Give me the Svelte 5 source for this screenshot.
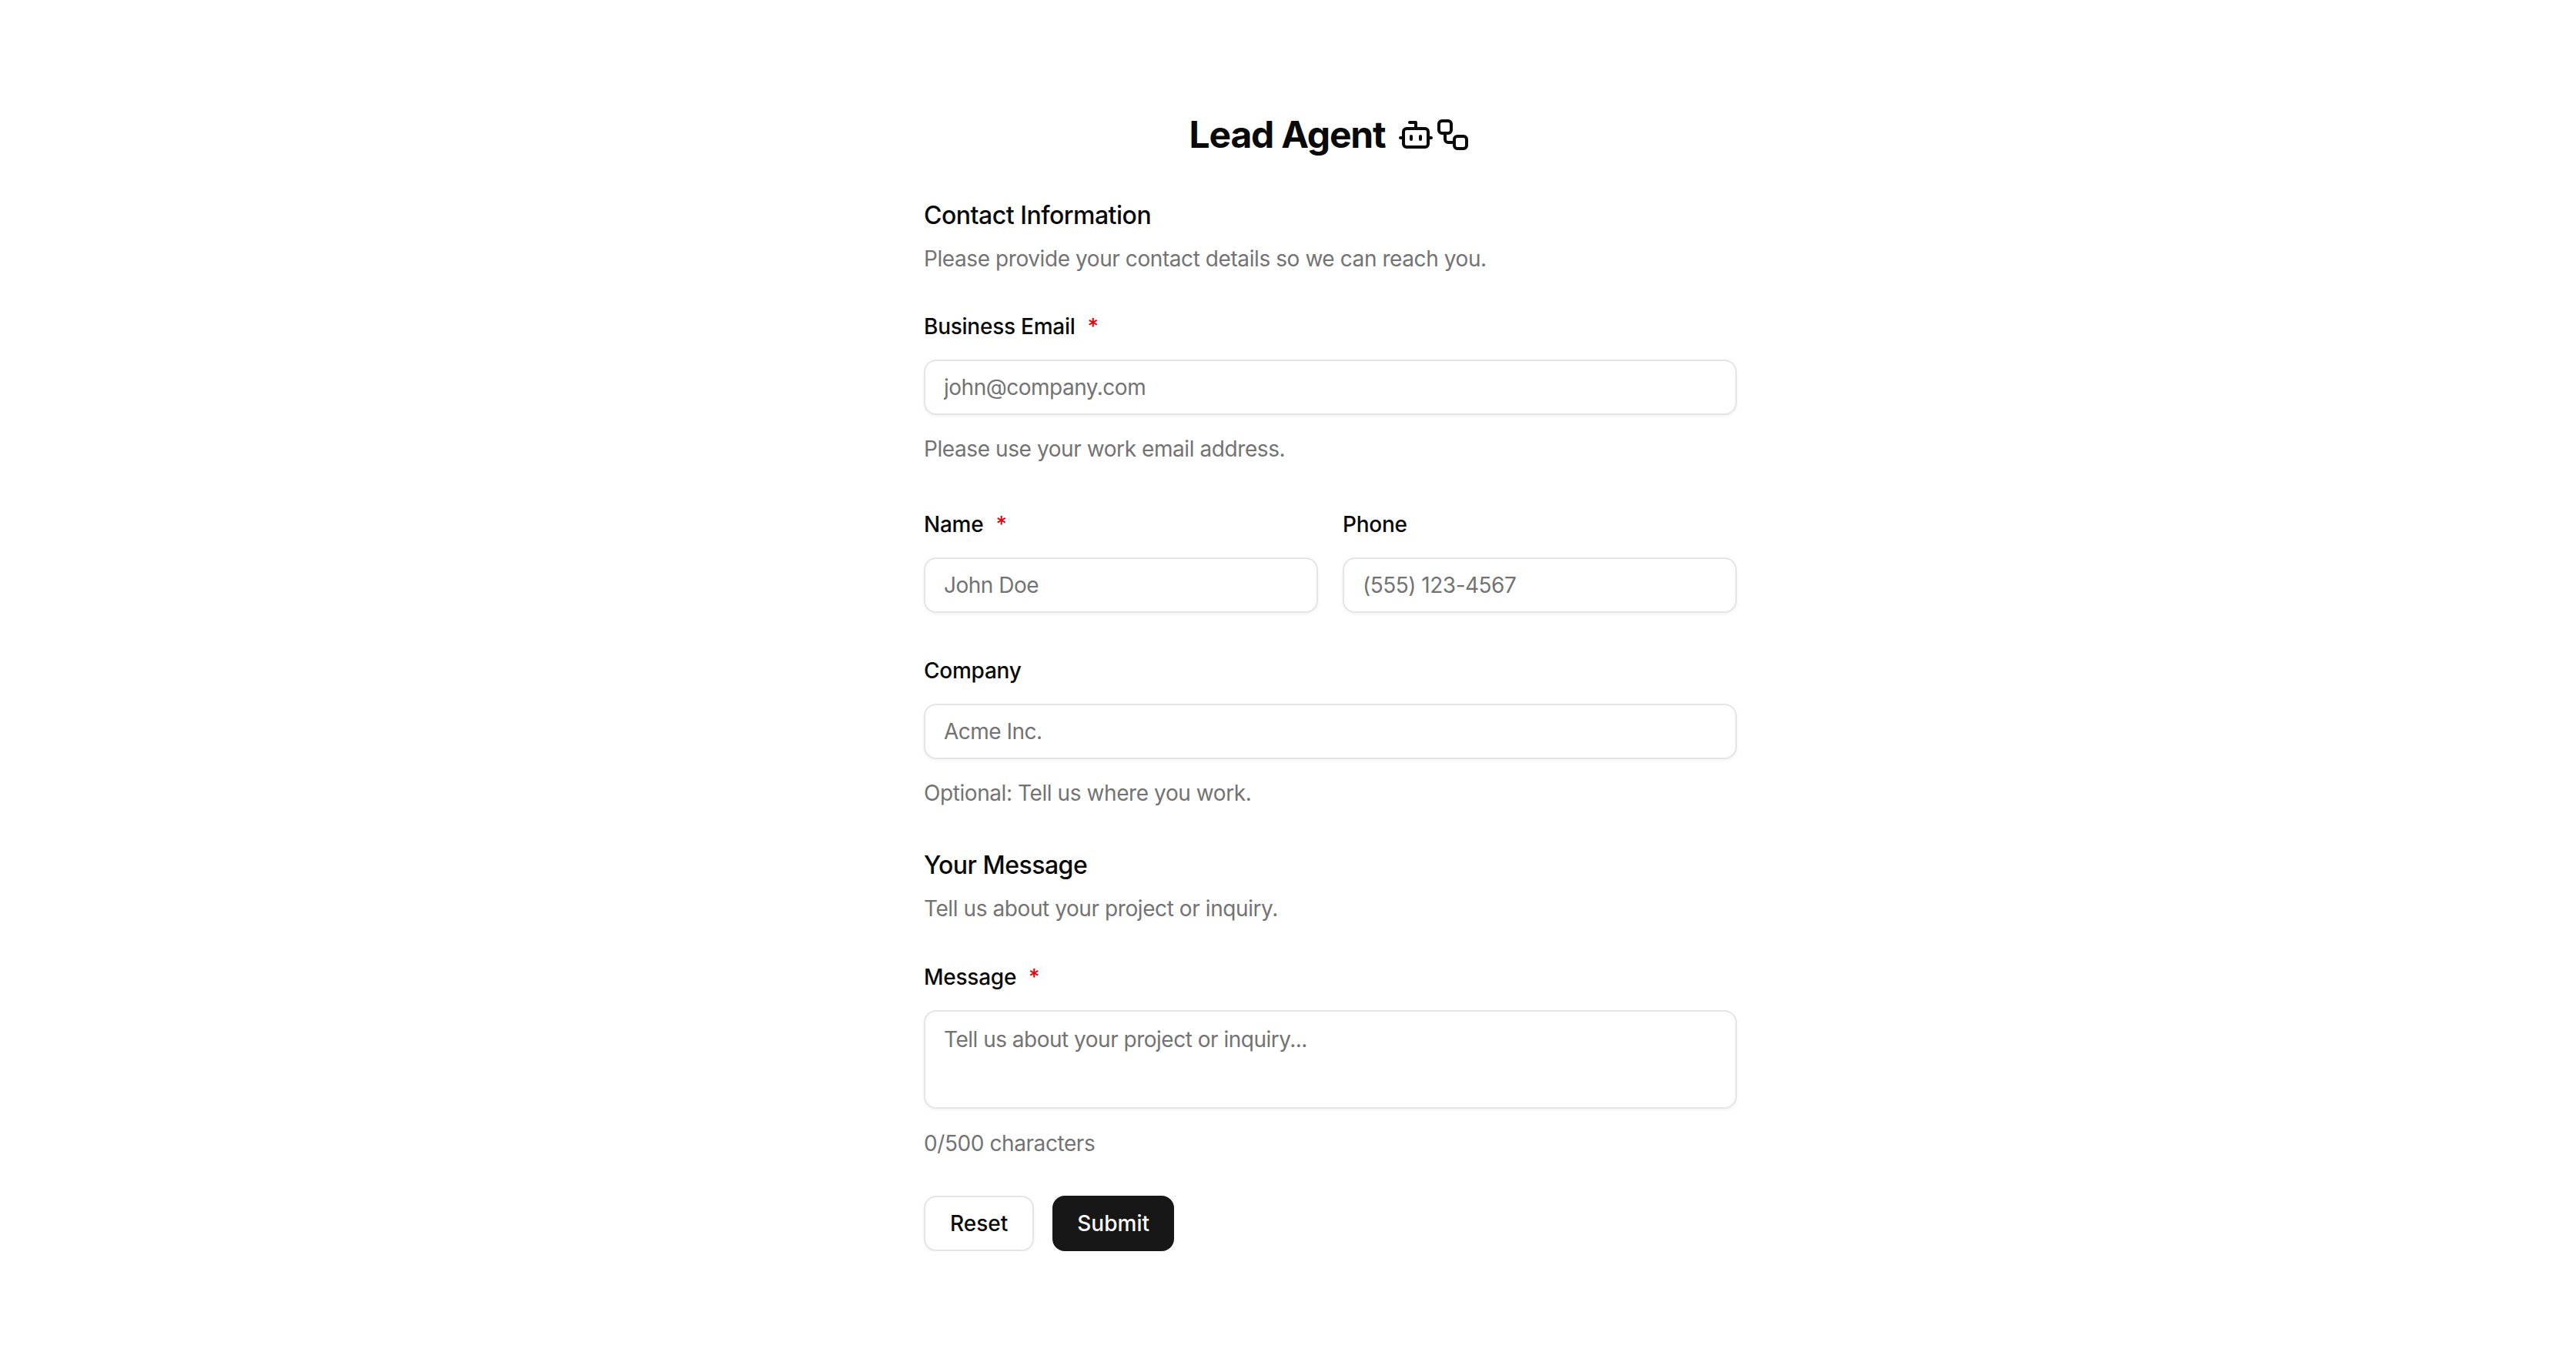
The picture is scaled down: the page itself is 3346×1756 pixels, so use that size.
<script>
  let message = $state('');
</script>

<div class="page">
  <form class="form" onsubmit={(e) => e.preventDefault()}>
    <div class="title">
      <h1>Lead Agent</h1>
      <div class="icons">
        <svg viewBox="0 0 24 24">
          <path d="M12 8V4H8" />
          <rect x="4" y="8" width="16" height="12" rx="2" />
          <path d="M2 14h2" />
          <path d="M20 14h2" />
          <path d="M15 13v2" />
          <path d="M9 13v2" />
        </svg>
        <svg viewBox="0 0 24 24">
          <rect x="3" y="3" width="8" height="8" rx="2" />
          <path d="M7 11v4a2 2 0 0 0 2 2h4" />
          <rect x="13" y="13" width="8" height="8" rx="2" />
        </svg>
      </div>
    </div>

    <section class="section-head">
      <h2>Contact Information</h2>
      <p class="muted">Please provide your contact details so we can reach you.</p>
    </section>

    <div class="field email">
      <label for="email">Business Email <span class="req">*</span></label>
      <input id="email" type="email" placeholder="john@company.com" />
      <p class="muted">Please use your work email address.</p>
    </div>

    <div class="row">
      <div class="field">
        <label for="name">Name <span class="req">*</span></label>
        <input id="name" type="text" placeholder="John Doe" />
      </div>
      <div class="field">
        <label for="phone">Phone</label>
        <input id="phone" type="tel" placeholder="(555) 123-4567" />
      </div>
    </div>

    <div class="field company">
      <label for="company">Company</label>
      <input id="company" type="text" placeholder="Acme Inc." />
      <p class="muted">Optional: Tell us where you work.</p>
    </div>

    <section class="section-head">
      <h2>Your Message</h2>
      <p class="muted">Tell us about your project or inquiry.</p>
    </section>

    <div class="field msg">
      <label for="message">Message <span class="req">*</span></label>
      <textarea id="message" placeholder="Tell us about your project or inquiry..." bind:value={message}></textarea>
      <p class="muted">{message.length}/500 characters</p>
    </div>

    <div class="actions">
      <button type="reset" class="btn secondary">Reset</button>
      <button type="submit" class="btn primary">Submit</button>
    </div>
  </form>
</div>

<style>
  :global(body) {
    margin: 0;
    background: #fff;
    font-family: Inter, 'Noto Sans', sans-serif;
    color: #0a0a0a;
  }

  .page {
    display: flex;
    justify-content: center;
    padding: 144px 0 0 110px;
  }

  .form {
    width: 1056px;
  }

  .title {
    display: flex;
    justify-content: center;
    align-items: center;
    gap: 16px;
    height: 62px;
  }

  h1 {
    margin: 0;
    font-size: 48px;
    line-height: 62px;
    font-weight: 700;
    letter-spacing: -1.2px;
  }

  .icons {
    display: flex;
  }

  .icons svg {
    width: 48px;
    height: 48px;
    fill: none;
    stroke: currentColor;
    stroke-width: 2;
    stroke-linecap: round;
    stroke-linejoin: round;
  }

  h2 {
    margin: 0;
    font-size: 32px;
    line-height: 48px;
    font-weight: 500;
    letter-spacing: -0.5px;
  }

  .section-head {
    margin-top: 50px;
  }

  .section-head .muted {
    margin-top: 12px;
  }

  .muted {
    margin: 0;
    font-size: 28px;
    line-height: 40px;
    color: #737373;
    letter-spacing: -0.42px;
  }

  .field {
    display: flex;
    flex-direction: column;
    min-width: 0;
  }

  .field .muted {
    margin-top: 24px;
  }

  .email {
    margin-top: 48px;
  }

  .row {
    display: grid;
    grid-template-columns: 1fr 1fr;
    gap: 32px;
    margin-top: 58px;
  }

  .company {
    margin-top: 55px;
  }

  .msg {
    margin-top: 49px;
  }

  label {
    display: flex;
    align-items: center;
    gap: 8px;
    font-size: 28px;
    line-height: 40px;
    font-weight: 500;
    margin-bottom: 23px;
    letter-spacing: -0.25px;
  }

  .req {
    color: #e7000b;
    margin-left: 8px;
  }

  input,
  textarea {
    box-sizing: border-box;
    width: 100%;
    margin: 0;
    padding: 0 24px;
    font: inherit;
    font-size: 28px;
    color: inherit;
    letter-spacing: -0.5px;
    background: #fff;
    border: 2px solid #e5e5e5;
    border-radius: 16px;
    box-shadow: 0 2px 4px rgba(0, 0, 0, 0.05);
    outline: none;
  }

  input {
    height: 72px;
  }

  textarea {
    display: block;
    height: 128px;
    padding: 16px 24px;
    line-height: 40px;
    resize: none;
  }

  input::placeholder,
  textarea::placeholder {
    color: #737373;
    opacity: 1;
  }

  .msg .muted {
    margin-top: 25px;
  }

  .actions {
    display: flex;
    gap: 24px;
    margin-top: 48px;
  }

  .btn {
    height: 72px;
    padding: 0 32px;
    font: inherit;
    font-size: 28px;
    font-weight: 500;
    border-radius: 16px;
    box-sizing: border-box;
    cursor: pointer;
  }

  .secondary {
    background: #fff;
    color: #0a0a0a;
    border: 2px solid #e5e5e5;
    box-shadow: 0 2px 4px rgba(0, 0, 0, 0.05);
  }

  .primary {
    background: #171717;
    color: #fafafa;
    border: none;
  }
</style>
